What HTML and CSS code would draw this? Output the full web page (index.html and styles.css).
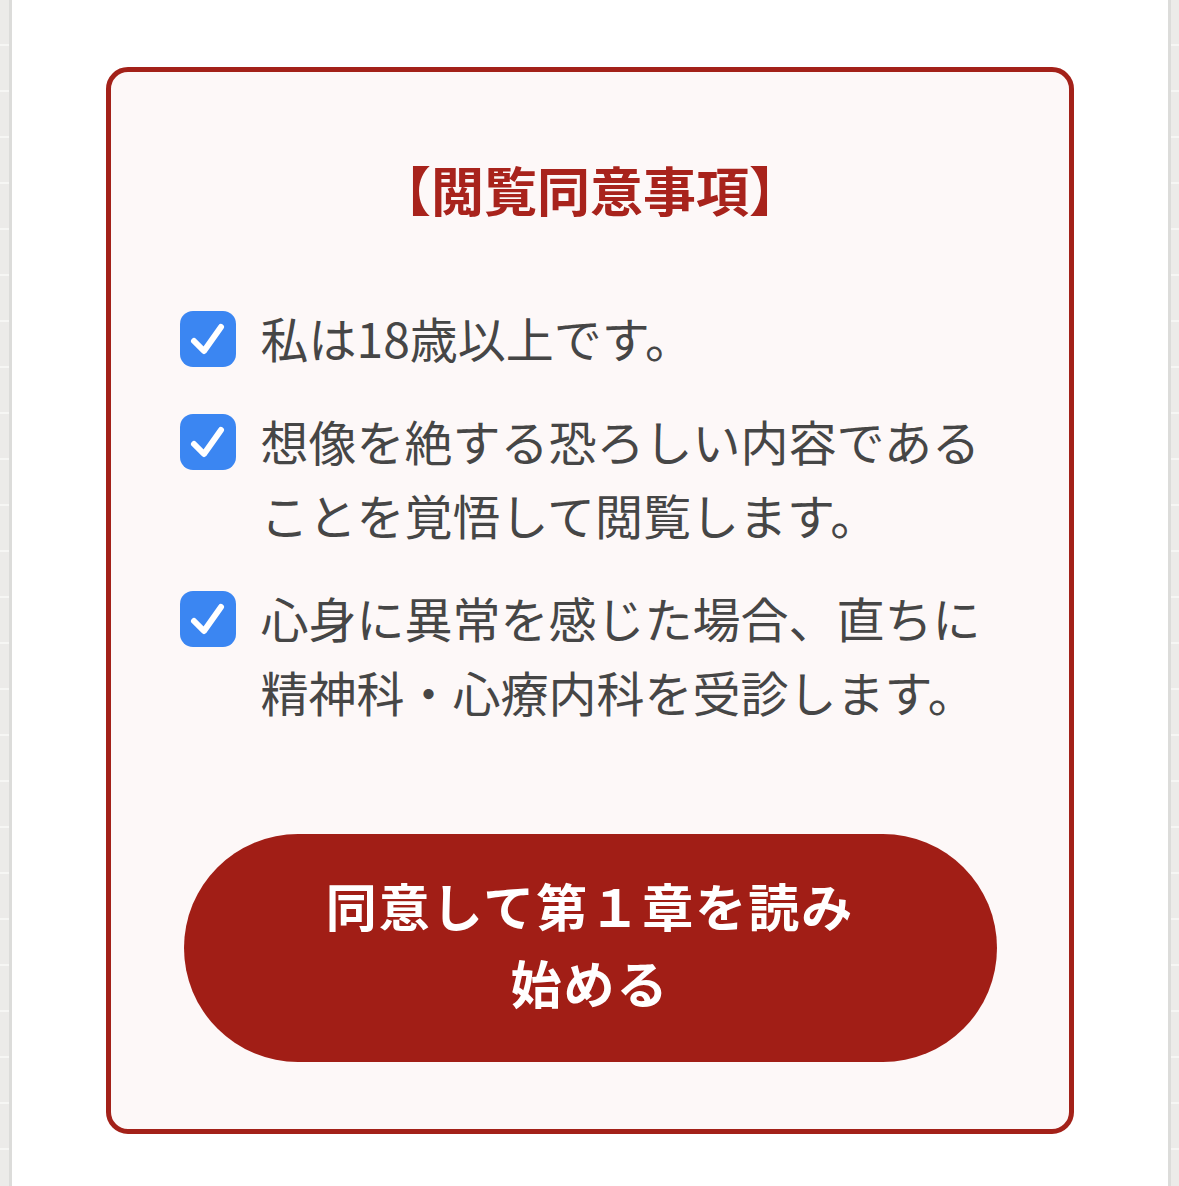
FILE: index.html
```html
<!DOCTYPE html>
<html lang="ja">
<head>
  <meta charset="UTF-8">
  <meta name="viewport" content="width=device-width, initial-scale=1.0">
  <title>閲覧同意事項</title>
  <link rel="stylesheet" href="styles.css">
</head>
<body>

  <div class="sheet">

    <!-- Consent box -->
    <section class="consent">
      <h2 class="consent-title">【閲覧同意事項】</h2>

      <ul class="consent-list">
        <li class="consent-item">
          <span class="check">
            <svg viewBox="0 0 56 56" width="56" height="56">
              <rect width="56" height="56" rx="13" fill="#3b86f2"/>
              <path d="M14 30 L24 40 L41 16" fill="none" stroke="#ffffff" stroke-width="6" stroke-linecap="round" stroke-linejoin="round"/>
            </svg>
          </span>
          <p class="consent-text">私は18歳以上です。</p>
        </li>
        <li class="consent-item">
          <span class="check">
            <svg viewBox="0 0 56 56" width="56" height="56">
              <rect width="56" height="56" rx="13" fill="#3b86f2"/>
              <path d="M14 30 L24 40 L41 16" fill="none" stroke="#ffffff" stroke-width="6" stroke-linecap="round" stroke-linejoin="round"/>
            </svg>
          </span>
          <p class="consent-text">想像を絶する恐ろしい内容であることを覚悟して閲覧します。</p>
        </li>
        <li class="consent-item">
          <span class="check">
            <svg viewBox="0 0 56 56" width="56" height="56">
              <rect width="56" height="56" rx="13" fill="#3b86f2"/>
              <path d="M14 30 L24 40 L41 16" fill="none" stroke="#ffffff" stroke-width="6" stroke-linecap="round" stroke-linejoin="round"/>
            </svg>
          </span>
          <p class="consent-text">心身に異常を感じた場合、直ちに精神科・心療内科を受診します。</p>
        </li>
      </ul>

      <button class="agree-btn" type="button">同意して第１章を読み始める</button>
    </section>

  </div>

</body>
</html>
```

FILE: styles.css
```css
/* General */
html, body {
  margin: 0;
  padding: 0;
}

body {
  font-family: "Noto Sans CJK JP", "Noto Sans", sans-serif;
  background-color: #ecebe9;
  background-image: repeating-linear-gradient(
    to bottom,
    transparent 0,
    transparent 44px,
    #f6f6f4 44px,
    #f6f6f4 46px
  );
  min-height: 1186px;
}

/* Paper sheet */
.sheet {
  box-sizing: border-box;
  width: 1162px;
  min-height: 1186px;
  margin: 0 auto;
  padding-top: 67px;
  background: #ffffff;
  border-left: 3px solid #dcdcda;
  border-right: 3px solid #dcdcda;
}

/* Consent box */
.consent {
  box-sizing: border-box;
  width: 968px;
  margin: 0 auto;
  padding: 80px 72px 67px 73px;
  background: #fdf8f8;
  border: 5px solid #a32119;
  border-radius: 22px;
}

.consent-title {
  margin: 0 0 74px;
  text-align: center;
  font-size: 53px;
  line-height: 74px;
  font-weight: 700;
  color: #a8231c;
}

/* Checklist */
.consent-list {
  list-style: none;
  margin: 0 0 106px -4px;
  padding: 0;
  display: flex;
  flex-direction: column;
  gap: 29px;
}

.consent-item {
  display: flex;
  align-items: flex-start;
  gap: 25px;
}

.check {
  flex: none;
  width: 56px;
  height: 56px;
  margin-top: 11px;
}

.check svg {
  display: block;
}

.consent-text {
  margin: 0;
  flex: 1;
  font-size: 48px;
  line-height: 74px;
  color: #464646;
}

/* Agree button */
.agree-btn {
  display: block;
  box-sizing: border-box;
  width: 813px;
  padding: 33px 130px 41px;
  border: none;
  border-radius: 114px;
  background: #a11e16;
  color: #ffffff;
  font-family: inherit;
  font-size: 51px;
  line-height: 77px;
  font-weight: 700;
  letter-spacing: 2px;
  text-align: center;
  cursor: pointer;
}
```
